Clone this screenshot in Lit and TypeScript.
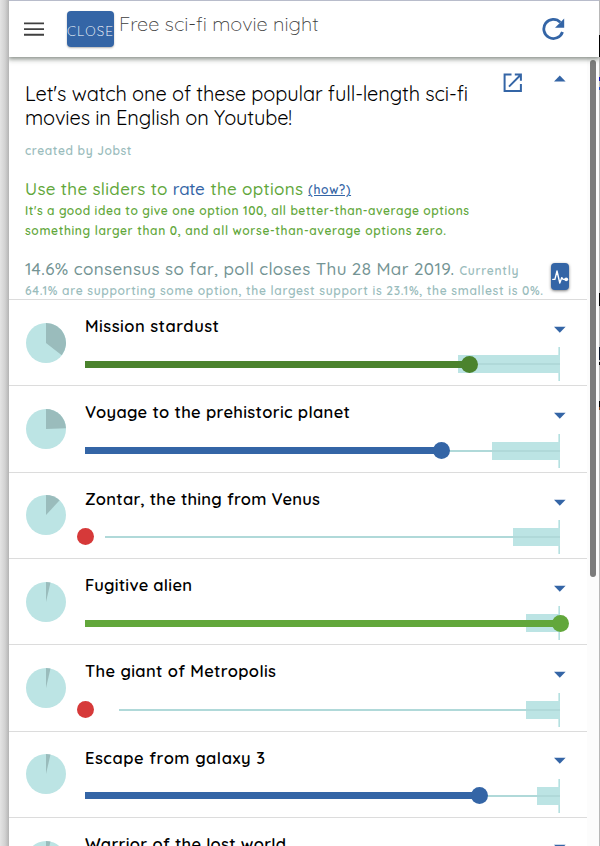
import { LitElement, html, css, svg } from "lit";
import { customElement, property } from "lit/decorators.js";

/** A single line of text whose letter spacing is adjusted to fill a given width. */
@customElement("fit-line")
class FitLine extends LitElement {
  @property({ type: Number }) width = 100;
  static styles = css`
    :host { display: inline-block; white-space: pre; }
  `;
  render() {
    return html`<slot></slot>`;
  }
  firstUpdated() {
    this.style.letterSpacing = "0px";
    const natural = this.getBoundingClientRect().width;
    const count = (this.textContent || "").length;
    this.style.letterSpacing = (this.width - natural) / Math.max(1, count - 1) + "px";
  }
}

interface Option {
  title: string;
  width: number;
  share: number;
  rating: number;
  tone: string;
  band: number;
  rail: number;
}

const options: Option[] = [
  { title: "Mission stardust", width: 134, share: 128, rating: 384.5, tone: "deep", band: 373, rail: 384 },
  { title: "Voyage to the prehistoric planet", width: 265, share: 88, rating: 356.5, tone: "blue", band: 407, rail: 356 },
  { title: "Zontar, the thing from Venus", width: 235, share: 43, rating: 0.5, tone: "red", band: 428.4, rail: 20 },
  { title: "Fugitive alien", width: 107, share: 13, rating: 475.5, tone: "green", band: 441, rail: 470 },
  { title: "The giant of Metropolis", width: 191, share: 13, rating: 0.5, tone: "red", band: 441, rail: 34 },
  { title: "Escape from galaxy 3", width: 180, share: 13, rating: 394.5, tone: "blue", band: 452.3, rail: 394 },
  { title: "Warrior of the lost world", width: 201, share: 13, rating: 300, tone: "blue", band: 455, rail: 300 },
];

@customElement("share-pie")
class SharePie extends LitElement {
  @property({ type: Number }) angle = 0;
  static styles = css`
    :host { display: block; width: 40px; height: 40px; }
    svg { display: block; }
    .base { fill: #bce4e4; }
    .slice { fill: #9abcbc; }
  `;
  render() {
    const a = (this.angle * Math.PI) / 180;
    const x = 20 + 20 * Math.sin(a);
    const y = 20 - 20 * Math.cos(a);
    return html`<svg width="40" height="40" viewBox="0 0 40 40">
      <circle class="base" cx="20" cy="20" r="20"></circle>
      ${svg`<path class="slice" d="M20 20V0A20 20 0 0 1 ${x} ${y}Z"></path>`}
    </svg>`;
  }
}

@customElement("poll-option")
class PollOption extends LitElement {
  @property({ attribute: false }) option!: Option;
  static styles = css`
    :host {
      display: grid;
      grid-template-columns: 76px 475px 1fr;
      box-sizing: border-box;
      height: 86.3125px;
      border-bottom: 1px solid #dcdcdc;
      position: relative;
    }
    share-pie { margin: 22.7px 0 0 17px; }
    .title {
      font-size: 16.5px;
      font-weight: 560;
      line-height: 24px;
      height: 24px;
      margin-top: 14px;
      color: #000;
    }
    .slider { position: relative; height: 34px; margin-top: 9.3px; }
    .slider > * { position: absolute; }
    .band { top: 8px; height: 18px; right: 0; background: #bce4e4; }
    .rail { top: 16px; height: 2px; right: 0; background: #b0d9d9; }
    .mark { top: 0; height: 34px; width: 2px; right: 0; background: linear-gradient(90deg, #d0ecec 50%, #b5e0e0 50%); }
    .bar { top: 13.4px; height: 7px; left: 0; background: var(--tone); }
    .knob { top: 8.4px; width: 17px; height: 17px; margin-left: -8.5px; border-radius: 50%; background: var(--tone); }
    .deep { --tone: #4b832d; }
    .blue { --tone: #3465a6; }
    .red { --tone: #d63939; }
    .red .bar { width: 0; }
    .green { --tone: #62a73b; }
    .more { position: absolute; left: 545px; top: 25.92px; display: block; fill: #3465a6; }
  `;
  render() {
    const o = this.option;
    return html`
      <share-pie .angle=${o.share}></share-pie>
      <div>
        <div class="title"><fit-line .width=${o.width}>${o.title}</fit-line></div>
        <div class="slider ${o.tone}">
          <div class="mark"></div>
          <div class="band" style="left:${o.band}px"></div>
          <div class="rail" style="left:${o.rail}px"></div>
          <div class="bar" style="width:${o.rating}px"></div>
          <div class="knob" style="left:${o.rating}px"></div>
        </div>
      </div>
      <svg class="more" width="12" height="7" viewBox="0 0 12 7"><path d="M0 .7h11.6L5.8 6.8z"></path></svg>
    `;
  }
}

@customElement("app-root")
class AppRoot extends LitElement {
  static styles = css`
    :host {
      display: block;
      position: relative;
      box-sizing: border-box;
      width: 600px;
      height: 846px;
      overflow: hidden;
      padding: 0 1px 0 9px;
      background: linear-gradient(90deg, #e4e4e4 0, #d2d2d2 5px, #b4b4b4 9px, #b8b8b8 9px);
      font-family: Quicksand, Lato, "Liberation Sans", sans-serif;
    }
    .page { height: 846px; background: #fff; overflow: hidden; }
    .behind {
      position: absolute;
      right: 0;
      top: 0;
      width: 1px;
      height: 846px;
      background: linear-gradient(#b8b8b8 35px, #000 35px 57px, #b8b8b8 57px 77px, #1414b4 77px 81px, #b8b8b8 81px 87px,
        #2850c8 87px 90px, #b8b8b8 90px 293px, #000 293px 306px, #b8b8b8 306px 347px, #0a1428 347px 360px,
        #b8b8b8 360px 362px, #000 362px 365px, #b8b8b8 365px 401px, #000 401px 407px, #8a4a20 407px 410px, #b8b8b8 410px);
    }
    header {
      position: relative;
      z-index: 2;
      display: flex;
      box-sizing: border-box;
      height: 57px;
      border-top: 1px solid #b8bccb;
      background: #fff;
      box-shadow: 0 1px 5px 1px rgba(60, 70, 60, 0.65);
    }
    .menu { margin: 20px 0 0 15px; width: 20px; height: 16px; flex: none; }
    .close {
      flex: none;
      display: flex;
      align-items: center;
      box-sizing: border-box;
      width: 47px;
      height: 36px;
      margin: 10px 0 0 23px;
      padding-top: 2px;
      border-radius: 4px;
      background: #3465a6;
      color: #fff;
      font-size: 13.5px;
      font-weight: 350;
      box-shadow: 0 1px 2px rgba(0, 0, 0, 0.3);
    }
    .name { margin: 9px 0 0 5px; width: 420px; font-size: 20px; line-height: 28px; font-weight: 360; color: #3c3c3c; }
    .refresh { margin: 16px 0 0 3px; flex: none; }
    .body { display: flex; height: 789px; }
    main { width: 578px; flex: none; }
    .gutter { flex: 1; background: #fcfcfc; padding: 3px 0 0 3px; }
    .thumb { width: 6px; height: 517px; border-radius: 3px; background: #7c7c7c; }
    .intro {
      box-sizing: border-box;
      height: 243px;
      padding: 25px 0 0 16px;
      border-bottom: 1px solid #dcdcdc;
      position: relative;
      overflow: visible;
    }
    .intro > div { white-space: nowrap; }
    .lead { font-size: 20px; line-height: 24px; height: 24px; font-weight: 370; color: #000; }
    .small { font-size: 12px; font-weight: 580; color: #9abcbc; }
    .by { line-height: 20px; height: 20px; margin-top: 11px; }
    .task { font-size: 17px; font-weight: 550; line-height: 22px; height: 22px; margin-top: 17px; color: #62a73b; display: flex; }
    .rate { color: #3465a6; margin-right: 1px; }
    .how { font-size: 12px; font-weight: 580; color: #3465a6; text-decoration: underline; margin-left: 5px; padding-top: 1px; }
    .hint { font-size: 12px; font-weight: 600; line-height: 21px; height: 20px; color: #62a73b; }
    .state { display: flex; margin-top: 18px; height: 22px; line-height: 22px; color: #749494; font-size: 17px; font-weight: 550; }
    .now { margin-left: 5px; padding-top: 2px; }
    .support { line-height: 21px; height: 20px; }
    .open { position: absolute; left: 494px; top: 16px; }
    .up { position: absolute; left: 545px; top: 18px; }
    .pulse {
      position: absolute;
      left: 542px;
      top: 206px;
      width: 18px;
      height: 27px;
      border-radius: 4px;
      background: #3465a6;
      box-shadow: 0 1px 3px rgba(0, 0, 0, 0.5);
    }
    svg { display: block; }
  `;
  render() {
    return html`
      <div class="behind"></div>
      <div class="page">
        <header>
          <svg class="menu" viewBox="0 0 20 16"><path d="M0 2.4h20M0 8.1h20M0 13.8h20" stroke="#404040" stroke-width="1.9"></path></svg>
          <div class="close"><fit-line .width=${46}>CLOSE</fit-line></div>
          <div class="name"><fit-line .width=${199.5}>Free sci-fi movie night</fit-line></div>
          <svg class="refresh" width="24" height="24" viewBox="0 0 24 24">
            <path d="M20.5 15A9.6 9.6 0 1 1 18.3 5.2" fill="none" stroke="#3465a6" stroke-width="2.8"></path>
            <path d="M22.2 1.5V10.7H13z" fill="#3465a6"></path>
          </svg>
        </header>
        <div class="body">
          <main>
            <section class="intro">
              <div class="lead"><fit-line .width=${443}>Let's watch one of these popular full-length sci-fi</fit-line></div>
              <div class="lead"><fit-line .width=${267}>movies in English on Youtube!</fit-line></div>
              <div class="small by"><fit-line .width=${106.5}>created by Jobst</fit-line></div>
              <div class="task">
                <fit-line .width=${147.5}>Use the sliders to </fit-line><fit-line class="rate" .width=${32}>rate</fit-line><fit-line .width=${97.5}> the options</fit-line>
                <fit-line class="how" .width=${42}>(how?)</fit-line>
              </div>
              <div class="hint"><fit-line .width=${444}>It's a good idea to give one option 100, all better-than-average options</fit-line></div>
              <div class="hint"><fit-line .width=${421}>something larger than 0, and all worse-than-average options zero.</fit-line></div>
              <div class="state">
                <fit-line .width=${429}>14.6% consensus so far, poll closes Thu 28 Mar 2019.</fit-line>
                <fit-line class="small now" .width=${59}>Currently</fit-line>
              </div>
              <div class="small support"><fit-line .width=${518}>64.1% are supporting some option, the largest support is 23.1%, the smallest is 0%.</fit-line></div>
              <svg class="open" width="20" height="20" viewBox="0 0 20 20" fill="none" stroke="#3465a6" stroke-width="2">
                <path d="M8.5 1.6H1.6V18h16.3V11M11.8 1.6h6.1v6.2M17.5 2L6 13.6"></path>
              </svg>
              <svg class="up" width="12" height="7" viewBox="0 0 12 7"><path d="M0 6.6h11.6L5.8 .5z" fill="#3465a6"></path></svg>
              <div class="pulse">
                <svg width="18" height="27" viewBox="0 0 18 27">
                  <path d="M1.8 16.4h2.1L6 8l2.8 12 2-5.4 1.3 1.8h2.4" fill="none" stroke="#fff" stroke-width="1.4" stroke-linejoin="round" stroke-linecap="round"></path>
                  <circle cx="15.2" cy="16.3" r="1.9" fill="#fff"></circle>
                </svg>
              </div>
            </section>
            ${options.map((o) => html`<poll-option .option=${o}></poll-option>`)}
          </main>
          <div class="gutter"><div class="thumb"></div></div>
        </div>
      </div>
    `;
  }
}
